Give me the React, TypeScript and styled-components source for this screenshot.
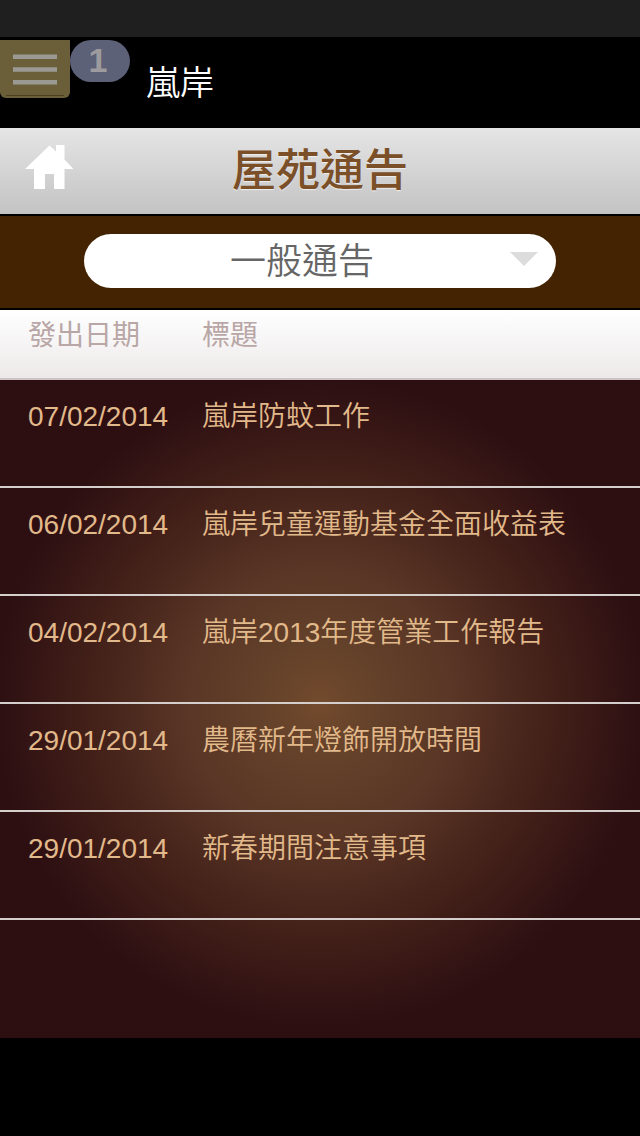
import React from "react";
import styled, { createGlobalStyle } from "styled-components";

const GlobalStyle = createGlobalStyle`
  *, *::before, *::after { box-sizing: border-box; }
  body {
    margin: 0;
    background: #000;
    font-family: "Liberation Sans", "Noto Sans CJK TC", sans-serif;
    font-weight: 350;
  }
`;

const Page = styled.div`
  display: flex;
  flex-direction: column;
  min-height: 100vh;
  background: #000;
`;

const StatusBar = styled.div`
  height: 37px;
  background: #1f1f1f;
`;

const AppHeader = styled.header`
  display: flex;
  align-items: flex-start;
  height: 91px;
  padding-top: 3px;
`;

const MenuButton = styled.button`
  width: 70px;
  height: 58px;
  padding: 0;
  border: 0;
  border-radius: 0 0 6px 6px;
  background: #6b5f39;
  svg { display: block; }
`;

const Badge = styled.span`
  width: 60px;
  height: 42px;
  border-radius: 21px;
  background: #5c6177;
  color: #9d9b9e;
  font-size: 34px;
  font-weight: 700;
  line-height: 40px;
  padding-right: 4px;
  text-align: center;
`;

const AppName = styled.span`
  margin-left: 16px;
  padding-top: 19px;
  color: #fff;
  font-size: 34px;
  line-height: 48px;
`;

const TitleBar = styled.div`
  display: grid;
  grid-template-columns: 98px 1fr 98px;
  align-items: center;
  height: 86px;
  background: linear-gradient(#e5e5e5, #c3c3c3);
`;

const HomeLink = styled.a`
  display: block;
  padding-left: 24px;
  padding-bottom: 8px;
  svg { display: block; }
`;

const Title = styled.h1`
  margin: 0;
  color: #7b4f28;
  font-size: 44px;
  font-weight: 500;
  line-height: 64px;
  text-align: center;
  text-shadow: 0 1px 1px #eee;
`;

const FilterBar = styled.div`
  padding: 18px 84px 20px;
  border: solid #000;
  border-width: 2px 0;
  background: #432302;
`;

const SelectBox = styled.div`
  position: relative;
  svg {
    position: absolute;
    right: 18px;
    top: 18px;
    pointer-events: none;
  }
`;

const Select = styled.select`
  display: block;
  width: 100%;
  height: 54px;
  padding: 2px 36px 0 0;
  border: 0;
  border-radius: 27px;
  appearance: none;
  background: #fff;
  color: #666;
  font: inherit;
  font-size: 36px;
  line-height: 52px;
  text-align: center;
  text-align-last: center;
`;

const Panel = styled.main`
  flex: 1;
  background: #2d0f12 radial-gradient(circle 324px at 50% 54%, #734a2d, #66432a 14%, #5a3726 40%, #442119 70%, #2d0f12);
`;

const Table = styled.table`
  width: 100%;
  table-layout: fixed;
  border-collapse: separate;
  border-spacing: 0;
  font-size: 28px;
  line-height: 40px;
`;

const HeadCell = styled.th<{ $width?: number }>`
  width: ${(p) => (p.$width ? `${p.$width}px` : "auto")};
  height: 70px;
  padding: 6px 0 0 ${(p) => (p.$width ? "28px" : "0")};
  border-bottom: 2px solid #cdc3c4;
  color: #b9a6a6;
  font-weight: 400;
  text-align: left;
  vertical-align: top;
`;

const HeadRow = styled.tr`
  background: linear-gradient(#fff, #ece8e8);
`;

const Cell = styled.td<{ $first?: boolean }>`
  height: 108px;
  padding: 17px 0 0 ${(p) => (p.$first ? "28px" : "0")};
  border-bottom: 2px solid #d4cfcc;
  color: #e2b98a;
  vertical-align: top;
`;

const Footer = styled.footer`
  height: 98px;
`;

const notices = [
  { date: "07/02/2014", title: "嵐岸防蚊工作" },
  { date: "06/02/2014", title: "嵐岸兒童運動基金全面收益表" },
  { date: "04/02/2014", title: "嵐岸2013年度管業工作報告" },
  { date: "29/01/2014", title: "農曆新年燈飾開放時間" },
  { date: "29/01/2014", title: "新春期間注意事項" },
];

export default function App() {
  return (
    <>
      <GlobalStyle />
      <Page lang="zh-Hant">
        <StatusBar />
        <AppHeader>
          <MenuButton type="button" aria-label="選單">
            <svg width="70" height="58" viewBox="0 0 70 58" fill="#9b9994">
              <path d="M13 14.500h44v4.500H13zM13 27.300h44v4.500H13zM13 40h44v4.500H13z" />
              <path d="M6 55h58v1H6z" fill="#4a4020" />
            </svg>
          </MenuButton>
          <Badge>1</Badge>
          <AppName>嵐岸</AppName>
        </AppHeader>
        <TitleBar>
          <HomeLink href="#" aria-label="主頁">
            <svg width="50" height="46" viewBox="0 0 50 46" fill="#fff">
              <path d="M1 25 25.500 1.500 32 7.500V1h8.500v14.500L49.500 25H40.500v20H30V30h-9v15H10V25z" />
            </svg>
          </HomeLink>
          <Title>屋苑通告</Title>
        </TitleBar>
        <FilterBar>
          <SelectBox>
            <Select aria-label="通告類別" defaultValue="general">
              <option value="general">一般通告</option>
            </Select>
            <svg width="28" height="14" viewBox="0 0 28 14" fill="#dcdcdc">
              <path d="M0 0h28L14 14z" />
            </svg>
          </SelectBox>
        </FilterBar>
        <Panel>
          <Table>
            <thead>
              <HeadRow>
                <HeadCell scope="col" $width={202}>發出日期</HeadCell>
                <HeadCell scope="col">標題</HeadCell>
              </HeadRow>
            </thead>
            <tbody>
              {notices.map((n) => (
                <tr key={n.title}>
                  <Cell $first>{n.date}</Cell>
                  <Cell>{n.title}</Cell>
                </tr>
              ))}
            </tbody>
          </Table>
        </Panel>
        <Footer />
      </Page>
    </>
  );
}
